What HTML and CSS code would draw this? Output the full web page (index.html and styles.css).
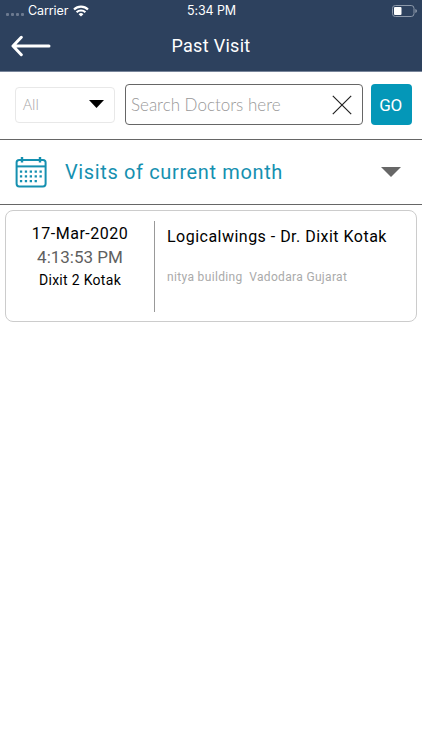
FILE: index.html
```
<!DOCTYPE html>
<html lang="en">
<head>
    <meta charset="UTF-8">
    <meta name="viewport" content="width=device-width, initial-scale=1.0">
    <title>Past Visit</title>
    <link rel="stylesheet" href="styles.css">
</head>
<body>

<header class="header">
    <div class="status-bar">
        <div class="carrier">
            <span class="signal"><i></i><i></i><i></i><i></i></span>
            <span class="carrier-name">Carrier</span>
            <svg class="wifi" width="16" height="12" viewBox="0 0 16 12" fill="none" stroke="#fff" stroke-width="2.2">
                <path d="M1 4.5 A10 10 0 0 1 15 4.5"/>
                <path d="M3.6 7.3 A6.3 6.3 0 0 1 12.4 7.3"/>
                <path d="M8 11.6 L5.6 9.2 A3.4 3.4 0 0 1 10.4 9.2 Z" fill="#fff" stroke="none"/>
            </svg>
        </div>
        <span class="clock">5:34 PM</span>
        <svg class="battery" width="26" height="12" viewBox="0 0 26 12">
            <rect x="1.5" y="0.5" width="21.5" height="11" rx="2.8" fill="none" stroke="#8d99aa"/>
            <rect x="3" y="2" width="7.5" height="8" rx="1" fill="#fff"/>
            <path d="M24.3 4 Q26 4.6 26 6 Q26 7.4 24.3 8 Z" fill="#8d99aa"/>
        </svg>
    </div>
    <div class="title-bar">
        <button type="button" class="back" aria-label="Back">
            <svg width="40" height="22" viewBox="0 0 40 22" fill="none" stroke="#fff" stroke-width="3" stroke-linecap="round" stroke-linejoin="round">
                <path d="M38 11 H2.5 M10.3 2.3 L2 11 L10.3 19.7"/>
            </svg>
        </button>
        <h1 class="title">Past Visit</h1>
    </div>
</header>

<form class="search">
    <button type="button" class="filter">
        <span class="filter-text">All</span>
        <svg width="15" height="8" viewBox="0 0 15 8"><path d="M0 0 H15 L7.5 8 Z" fill="#000"/></svg>
    </button>
    <div class="search-box">
        <input type="text" class="search-input" placeholder="Search Doctors here">
        <svg width="20" height="20" viewBox="0 0 20 20" stroke="#222" stroke-width="1.2"><path d="M0.8 0.8 L19.2 19.2 M19.2 0.8 L0.8 19.2"/></svg>
    </div>
    <button type="button" class="go">GO</button>
</form>

<section class="month">
    <svg class="calendar" width="32" height="32" viewBox="0 0 32 32" fill="none" stroke="#1590b0" stroke-width="2">
        <rect x="1.6" y="4" width="29" height="26.4" rx="2.6"/>
        <path d="M1.6 10.4 H30.6"/>
        <path d="M7 1 V6.5 M25 1 V6.5" stroke-width="2.4"/>
        <path d="M4.9 15.6 H28 M4.9 20.4 H28 M4.9 25.2 H23" stroke-width="2.3" stroke-dasharray="2.3 2.6"/>
    </svg>
    <h2 class="month-title">Visits of current month</h2>
    <svg width="20" height="10" viewBox="0 0 20 10"><path d="M0 0 H20 L10 10 Z" fill="#676767"/></svg>
</section>

<main class="visits">
    <article class="visit">
        <div class="visit-when">
            <span class="visit-date">17-Mar-2020</span>
            <span class="visit-time">4:13:53 PM</span>
            <span class="visit-patient">Dixit 2 Kotak</span>
        </div>
        <div class="visit-info">
            <span class="visit-doctor">Logicalwings - Dr. Dixit Kotak</span>
            <span class="visit-address">nitya building&nbsp; Vadodara Gujarat</span>
        </div>
    </article>
</main>

</body>
</html>
```
FILE: styles.css
```
* {
    box-sizing: border-box;
}
body {
    margin: 0;
    font-family: Roboto, Arial, sans-serif;
    background-color: #fff;
}
button {
    padding: 0;
    border: none;
    background: none;
    font-family: inherit;
}
svg {
    display: block;
    flex: none;
}
h1, h2 {
    margin: 0;
    font-weight: 400;
}
.header {
    height: 72px;
    background-color: #2d415e;
    border-bottom: 1px solid #77849a;
    color: #fff;
}
.status-bar {
    display: grid;
    grid-template-columns: 1fr auto 1fr;
    align-items: center;
    height: 20px;
    padding: 0 5px 0 6px;
    font-family: Inter, sans-serif;
    font-size: 12.5px;
    line-height: 20px;
}
.carrier {
    display: flex;
    align-items: center;
}
.signal {
    display: flex;
    gap: 2px;
    width: 22px;
    padding-top: 7px;
}
.signal i {
    width: 3px;
    height: 3px;
    border-radius: 1px;
    background-color: #6c7a90;
}
.carrier-name {
    width: 45px;
    padding-top: 1px;
    letter-spacing: -0.1px;
}
.clock {
    padding-top: 1px;
    letter-spacing: -0.1px;
}
.battery {
    justify-self: end;
}
.title-bar {
    display: grid;
    grid-template-columns: 60px 1fr 60px;
    align-items: center;
    height: 51px;
}
.back {
    padding-left: 11px;
}
.title {
    text-align: center;
    font-size: 18px;
    letter-spacing: 0.3px;
}
.search {
    display: flex;
    align-items: center;
    height: 68px;
    padding: 0 10px 2px 15px;
    border-bottom: 1px solid #666;
}
.filter {
    display: flex;
    align-items: center;
    justify-content: space-between;
    width: 100px;
    height: 36px;
    margin-right: 10px;
    padding: 0 10px 0 7px;
    border: 1px solid #e8e8e8;
    border-radius: 4px;
}
.filter-text {
    margin-top: -2px;
    color: #a8a8a8;
    font-family: "Open Sans", sans-serif;
    font-size: 15px;
    font-weight: 300;
}
.filter svg {
    margin-top: -1px;
}
.search-box {
    display: flex;
    align-items: center;
    width: 238px;
    height: 41px;
    margin-right: 8px;
    padding: 0 10px 0 5px;
    border: 1px solid #666;
    border-radius: 4px;
}
.search-input {
    flex: 1;
    min-width: 0;
    padding: 0 0 1px;
    border: none;
    outline: none;
    font-family: Lato, sans-serif;
    font-size: 17px;
    font-weight: 300;
}
.search-input::placeholder {
    color: #999;
}
.go {
    width: 41px;
    height: 41px;
    padding-right: 2px;
    border-radius: 4px;
    background-color: #0497b8;
    color: #fff;
    font-size: 17px;
    letter-spacing: -0.3px;
}
.month {
    display: flex;
    align-items: center;
    height: 65px;
    padding: 0 21px 0 15px;
    border-bottom: 1px solid #666;
}
.month-title {
    flex: 1;
    margin-left: 18px;
    color: #1590b0;
    font-size: 20px;
    letter-spacing: 0.63px;
}
.visits {
    padding: 5px 5px 0;
}
.visit {
    display: flex;
    height: 112px;
    padding: 10px 0 9px;
    border: 1px solid #ccc;
    border-radius: 8px;
}
.visit-when {
    display: flex;
    flex-direction: column;
    align-items: center;
    width: 149px;
    border-right: 1px solid #999;
    color: #000;
}
.visit-date {
    font-size: 16px;
    letter-spacing: 0.5px;
    line-height: 25px;
}
.visit-time {
    color: #606060;
    font-size: 17px;
    line-height: 22px;
}
.visit-patient {
    font-size: 14px;
    letter-spacing: 0.3px;
    line-height: 24px;
}
.visit-info {
    display: flex;
    flex-direction: column;
    padding-left: 12px;
}
.visit-doctor {
    color: #000;
    font-size: 16px;
    letter-spacing: 0.48px;
    line-height: 31px;
}
.visit-address {
    margin-top: 15px;
    color: #aaa;
    font-size: 12px;
    letter-spacing: 0.34px;
    line-height: 20px;
}
```
